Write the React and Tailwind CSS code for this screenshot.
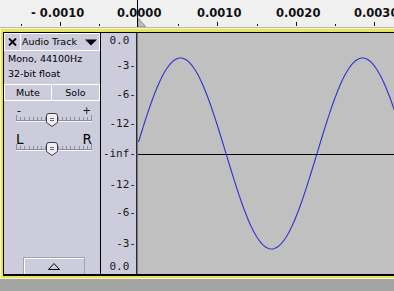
import React from 'react';

const timeLabels = [
  { text: '- 0.0010', left: 'left-[31px]' },
  { text: '0.0000', left: 'left-[117px]' },
  { text: '0.0010', left: 'left-[197px]' },
  { text: '0.0020', left: 'left-[276px]' },
  { text: '0.0030', left: 'left-[354px]' },
];

// ruler ticks, major every 78.6px
const majorTicks = [60, 138.6, 217.2, 295.8, 374.4];
const minorTicks = [20.7, 99.3, 177.9, 256.5, 335.1];

const dbLabels = [
  { text: '0.0 ', top: 1 },
  { text: '-3-', top: 26 },
  { text: '-6-', top: 55 },
  { text: '-12-', top: 84 },
  { text: '-inf-', top: 114 },
  { text: '-12-', top: 145 },
  { text: '-6-', top: 173 },
  { text: '-3-', top: 204 },
  { text: '0.0 ', top: 227 },
];

const TimeRuler = () => (
  <div className="relative h-[28px] bg-[#f0f0f0] border-b border-[#b9b9b9] font-['DejaVu_Sans',sans-serif]">
    {timeLabels.map((l, i) => (
      <span
        key={i}
        className={`absolute top-[6px] ${l.left} text-[11.5px] leading-[14px] font-bold text-[#111] whitespace-pre`}
      >
        {l.text}
      </span>
    ))}
    <svg className="absolute left-0 top-0" width="394" height="27">
      {majorTicks.map((x) => (
        <rect key={x} x={Math.round(x)} y="22" width="1" height="4" fill="#111" />
      ))}
      {minorTicks.map((x) => (
        <rect key={x} x={Math.round(x)} y="24" width="1" height="2" fill="#111" />
      ))}
      {/* selection start marker + cursor line */}
      <polygon points="138,18 138,27 146,27" fill="#bcbcbc" stroke="#8c8c8c" strokeWidth="1" />
      <rect x="137" y="0" width="1" height="27" fill="#000" />
    </svg>
  </div>
);

const SliderTrack = () => {
  const ticks = [];
  for (let i = 0; i <= 18; i++) ticks.push(Math.round(i * 4.17));
  return (
    <svg width="76" height="16" shapeRendering="crispEdges" className="block">
      {ticks.map((x, i) => (
        <rect
          key={i}
          x={x}
          y={i === 0 || i === 18 ? 2 : 4}
          width="1"
          height={i === 0 || i === 18 ? 5 : 3}
          fill="#8e8e9c"
        />
      ))}
      <rect x="0" y="7" width="76" height="1" fill="#8e8e9c" />
      <rect x="0" y="8" width="76" height="1" fill="#f4f4f8" />
      <g transform="translate(30,0)">
        <path
          d="M0.5 3 Q0.5 0.5 3 0.5 H9 Q11.5 0.5 11.5 3 V9.5 L6 13.5 L0.5 9.5 Z"
          fill="#ececf2"
          stroke="#3c3c44"
          shapeRendering="geometricPrecision"
        />
        <rect x="4" y="5" width="4" height="1" fill="#6c6c78" />
        <rect x="4" y="7" width="4" height="1" fill="#6c6c78" />
      </g>
    </svg>
  );
};

const ControlPanel = () => (
  <div className="w-[96px] h-full bg-[#ccccdc] flex flex-col text-[9.5px] text-black font-['DejaVu_Sans',sans-serif]">
    <div className="flex h-[18px] border border-white">
      <div className="w-[16px] border-r border-white flex items-center justify-center">
        <svg width="9" height="8">
          <path d="M1 0.5 L8 7.5 M8 0.5 L1 7.5" stroke="#000" strokeWidth="1.8" />
        </svg>
      </div>
      <div className="flex-1 flex items-center justify-between pl-[1px] pr-[2px] leading-[12px]">
        <span>Audio Track</span>
        <svg width="12" height="7">
          <polygon points="0,0.5 12,0.5 6,6.5" fill="#000" />
        </svg>
      </div>
    </div>
    <div className="pl-[4px] leading-[15px]">
      <div>Mono, 44100Hz</div>
      <div>32-bit float</div>
    </div>
    <div className="mt-[3px] flex h-[17px] border border-white leading-[12px]">
      <div className="w-[47px] border-r border-white flex items-center justify-center">Mute</div>
      <div className="flex-1 flex items-center justify-center">Solo</div>
    </div>

    <div className="ml-[12px] w-[76px]">
      <div className="flex justify-between items-start h-[12px] text-[11px] leading-[20px]">
        <span className="ml-[1px]">-</span>
        <span className="text-[10px] mr-[1px]">+</span>
      </div>
      <SliderTrack />
    </div>

    <div className="ml-[12px] w-[76px]">
      <div className="flex justify-between items-start h-[13px] text-[13.5px] leading-[20px]">
        <span>L</span>
        <span>R</span>
      </div>
      <SliderTrack />
    </div>

    <div className="mt-auto ml-[19px] w-[62px] h-[17px] border border-b-0 border-[#a4a4b0] shadow-[inset_1px_1px_0_#ffffff] flex items-center justify-center">
      <svg width="12" height="7">
        <polygon points="0.5,6.5 6,0.5 11.5,6.5" fill="none" stroke="#000" />
      </svg>
    </div>
  </div>
);

const DbRuler = () => (
  <div className="relative w-[35px] h-full bg-[#ccccdc] font-['DejaVu_Sans_Mono',monospace] text-[11px] text-[#1a1a1a]">
    {dbLabels.map((l, i) => (
      <span
        key={i}
        className="absolute right-0 leading-[14px] whitespace-pre"
        style={{ top: l.top }}
      >
        {l.text}
      </span>
    ))}
  </div>
);

const Waveform = () => {
  const pts = [];
  for (let x = 0; x <= 256; x++) {
    const y = 120.5 - 95.5 * Math.sin((2 * Math.PI * (x + 138 - 134.5)) / 182);
    pts.push(`${x + 0.5},${y.toFixed(2)}`);
  }
  return (
    <div className="flex-1 h-full bg-[#c0c0c0]">
      <svg width="256" height="241" className="block">
        <rect x="0" y="121" width="256" height="1" fill="#000" />
        <polyline points={pts.join(' ')} fill="none" stroke="#3030cc" strokeWidth="1.1" />
      </svg>
    </div>
  );
};

const Track = () => (
  <div className="border-t border-l border-b border-[#f6f6bc]">
    <div className="border-t-[3px] border-l-[2px] border-b-[2px] border-[#e4e462]">
      <div className="flex h-[244px] border-t border-l border-b-[2px] border-black">
        <ControlPanel />
        <div className="w-px h-full bg-black" />
        <DbRuler />
        <div className="w-px h-full bg-[#2c2c2c]" />
        <div className="w-px h-full bg-[#7a7a7a]" />
        <Waveform />
      </div>
    </div>
  </div>
);

export default function App() {
  return (
    <div className="w-[394px] h-[291px] overflow-hidden bg-[#a4a4a4]">
      <TimeRuler />
      <Track />
    </div>
  );
}
